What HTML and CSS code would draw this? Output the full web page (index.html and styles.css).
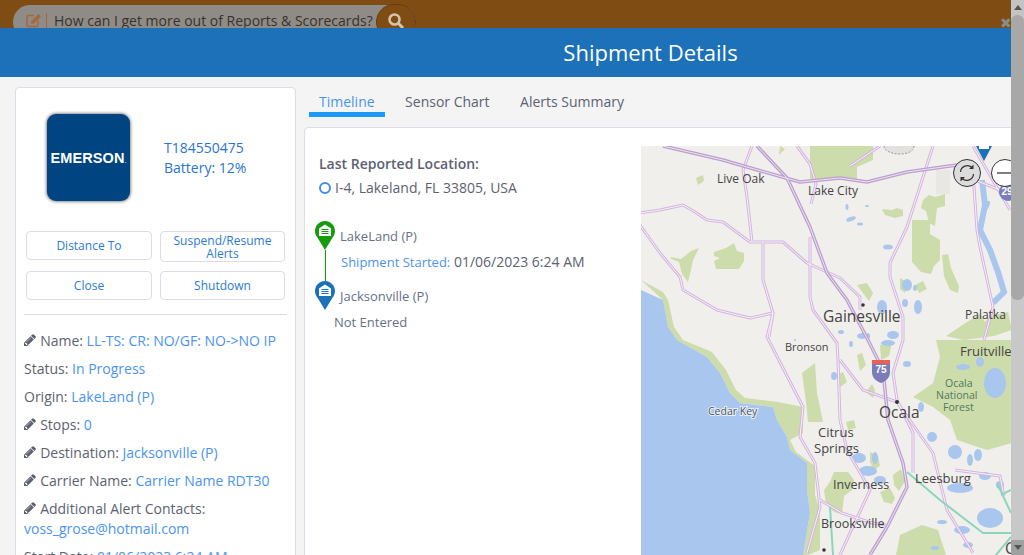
FILE: index.html
```html
<!DOCTYPE html>
<html lang="en">
<head>
<meta charset="utf-8">
<title>Shipment Details</title>
<link rel="stylesheet" href="styles.css">
</head>
<body>
<svg class="defs" aria-hidden="true">
  <symbol id="pencil" viewBox="0 0 1792 1792"><path d="M363 1408l91-91-235-235-91 91v107h128v128h107zm523-928q0-22-22-22-10 0-17 7l-542 542q-7 7-7 17 0 22 22 22 10 0 17-7l542-542q7-7 7-17zm-54-192l416 416-832 832h-416v-416zm683 96q0 53-37 90l-166 166-416-416 166-165q36-38 90-38 53 0 91 38l235 234q37 39 37 91z"/></symbol>
  <symbol id="pin" viewBox="0 0 20 29"><path fill="currentColor" d="M10 0C4.500 0 0 4.400 0 10c0 3 1.200 5.200 3 7.500L10 29l7-11.500c1.800-2.300 3-4.500 3-7.500C20 4.400 15.500 0 10 0z"/><path fill="#fff" d="M10 3.500 16 7.500V15H4V7.500z"/><path fill="currentColor" d="M6.500 8h7v1h-7zM6.500 10h7v1h-7zM6.500 12h7v1h-7z"/></symbol>
</svg>
<div class="app">
  <div class="window">
    <div class="backdrop">
      <div class="search-pill">
        <svg class="pill-icon" viewBox="0 0 18 16"><path fill="none" stroke="#a5683a" stroke-width="1.500" d="M13 8.500V13a1.500 1.500 0 0 1-1.500 1.500h-8A1.500 1.500 0 0 1 2 13V5a1.500 1.500 0 0 1 1.500-1.500H9"/><path fill="#a5683a" d="M6.500 9 13.500 2l2.500 2.500L9 11.500 6 12z"/></svg>
        <span class="pill-sep"></span>
        <span class="pill-text">How can I get more out of Reports &amp; Scorecards?</span>
        <span class="pill-btn"><svg viewBox="0 0 18 18" class="pill-search"><circle cx="7.500" cy="7.500" r="5" fill="none" stroke="#d8c3ab" stroke-width="2.600"/><path d="M11 11l5 5" stroke="#d8c3ab" stroke-width="3"/></svg></span>
      </div>
      <span class="backdrop-close">✖</span>
    </div>
    <header class="modal-header"><h1>Shipment Details</h1></header>
    <main class="modal-body">
      <aside class="card">
        <div class="device">
          <div class="logo"><span>EMERSON<small>.</small></span></div>
          <div class="device-info"><div>T184550475</div><div>Battery: 12%</div></div>
        </div>
        <div class="actions">
          <button class="btn">Distance To</button>
          <button class="btn btn-tall">Suspend/Resume Alerts</button>
          <button class="btn">Close</button>
          <button class="btn">Shutdown</button>
        </div>
        <hr class="divider">
        <div class="field"><svg class="pencil"><use href="#pencil"/></svg> Name: <a>LL-TS: CR: NO/GF: NO-&gt;NO IP</a></div>
        <div class="field">Status: <a>In Progress</a></div>
        <div class="field">Origin: <a>LakeLand (P)</a></div>
        <div class="field"><svg class="pencil"><use href="#pencil"/></svg> Stops: <a>0</a></div>
        <div class="field"><svg class="pencil"><use href="#pencil"/></svg> Destination: <a>Jacksonville (P)</a></div>
        <div class="field"><svg class="pencil"><use href="#pencil"/></svg> Carrier Name: <a>Carrier Name RDT30</a></div>
        <div class="field"><svg class="pencil"><use href="#pencil"/></svg> Additional Alert Contacts:<br><a>voss_grose@hotmail.com</a></div>
        <div class="field">Start Date: <a>01/06/2023 6:24 AM</a></div>
      </aside>
      <section class="content">
        <nav class="tabs">
          <span class="tab tab-active">Timeline</span>
          <span class="tab">Sensor Chart</span>
          <span class="tab">Alerts Summary</span>
        </nav>
        <div class="panel">
          <div class="timeline">
            <div class="last-title">Last Reported Location:</div>
            <div class="last-value"><span class="ring"></span>I-4, Lakeland, FL 33805, USA</div>
            <div class="stop stop-first"><svg class="pin pin-green"><use href="#pin"/></svg><span>LakeLand (P)</span></div>
            <div class="stop-detail stop-rail"><a>Shipment Started:</a> 01/06/2023 6:24 AM</div>
            <div class="stop"><svg class="pin pin-blue"><use href="#pin"/></svg><span>Jacksonville (P)</span></div>
            <div class="stop-detail stop-last">Not Entered</div>
          </div>
          <svg class="map" viewBox="641 146 375 409" width="375" height="409">
            <rect x="641" y="146" width="375" height="409" fill="#f1efec"/>
            <g fill="#cddcab">
              <path d="M810 146h63v14l-16 7v13h-47z"/>
              <path d="M671 257l10 2 10-8 8-3-6 12-3 14-2 8-6-8-3-12-8-3z"/>
              <path d="M714 252l12-4 8-5 3 8 7 2v8l-5 8h-23l-2-8 6-3-6-2z"/>
              <path d="M923 200l6-5 6 2 10-3v12l-8 2-2 18-6-3-3-12-5-3z"/>
              <path d="M912 220h18v14l10 6v20l-6 6-3 8-10-2-9-10z"/>
              <path d="M882 209l10 1 5-2 6 2v6l-8 2-10-3z"/>
              <path d="M942 255l6-1 3 14 8 18-1 7-8-3-6-14z"/>
              <path d="M915 285l8-4 4 8-8 4zM900 278l8 5-3 10-5-4z"/>
              <path d="M1012 340H936l4 17-7 26-20 14 20 10 17 13 7 20 30 10 25-7z"/>
              <path d="M946 336l18-12 16-10 5 8 5-6 18-4 4 18-18 6-30 4z"/>
              <path d="M880 345l12-3-3 14-8 4z"/>
              <path d="M641 280L663 292 668 300 674 327 683 340 712 352 726 370 736 390 745 398 778 402 803 407 803 433 790 440 796 452 815 466 815 495 820 510 820 550 808 555 803 555 810 513 807 490 807 463 790 450 787 437 777 420 773 407 740 403 730 393 720 373 707 357 677 340 668 327 663 300Z"/>
              <path d="M802 373l13-10 2 30 6 29h-15l-2-20z"/>
              <path d="M834 472h14l6 8-2 10-8 6-2 18-8-2-8-8-2-14 6-8z"/>
              <path d="M893 475l8-6 4 12-6 10-5-6z"/>
              <path d="M857 355l5-2 4 12-6 6z"/>
              <path d="M866 392l6-8 3 6-2 8zM870 452l8 4 2 10-6 4-4-8z"/>
              <path d="M900 535l22-10 16 5 8 25h-50z"/>
              <path d="M857 285l10-2 6 10-4 8zM696 178l7-3 1 6-6 4zM780 146l5 3-6 6z"/>
              <path d="M836 375l7-3 4 10-7 5zM846 422l8-2 2 8-8 2z"/>
              <path d="M880 492l10-4 5 10-3 6-8-2z"/>
            </g>
            <path d="M884 146c0 5 8 8 16 8s14-3 14-8" fill="#e3e1dd" stroke="#9a9a94" stroke-dasharray="2 1.500"/>
            <rect x="936" y="170" width="14" height="24" fill="#e9e7e3"/>
            <path fill="#a9c6ee" d="M641 290l22 10 5 27 9 13 30 17 13 16 10 20 10 10 33 4 4 13 10 17 3 13 17 13 0 27 3 23-7 42H641z"/>
            <path d="M982 180l3 25-5 25 10 20 8 22 6 20-11 11" fill="none" stroke="#a9c6ee" stroke-width="6"/>
            <g fill="#a9c6ee">
              <ellipse cx="847" cy="207" rx="1.500" ry="3"/><ellipse cx="851" cy="219" rx="5" ry="2" transform="rotate(-20 851 219)"/><ellipse cx="860" cy="224" rx="3" ry="1.500"/><ellipse cx="867" cy="206" rx="2" ry="1"/>
              <ellipse cx="888" cy="247" rx="5" ry="2.500"/><ellipse cx="907" cy="285" rx="5" ry="6"/><ellipse cx="915" cy="288" rx="2" ry="3"/><ellipse cx="918" cy="307" rx="4" ry="7"/>
              <ellipse cx="882" cy="307" rx="5" ry="7"/><ellipse cx="905" cy="303" rx="3" ry="4"/><ellipse cx="862" cy="336" rx="5" ry="3"/><ellipse cx="893" cy="335" rx="6" ry="4"/>
              <ellipse cx="986" cy="207" rx="2.500" ry="7" transform="rotate(30 986 207)"/><ellipse cx="868" cy="336" rx="2" ry="3"/><ellipse cx="841" cy="332" rx="3" ry="2"/>
              <ellipse cx="995" cy="383" rx="11" ry="15"/><ellipse cx="963" cy="367" rx="7" ry="3"/><ellipse cx="980" cy="362" rx="4" ry="5"/>
              <ellipse cx="834" cy="376" rx="3" ry="4"/><ellipse cx="907" cy="364" rx="4" ry="3"/><ellipse cx="888" cy="343" rx="7" ry="3"/>
              <ellipse cx="932" cy="437" rx="5" ry="5"/><ellipse cx="885" cy="393" rx="1" ry="2"/><ellipse cx="921" cy="407" rx="3" ry="5"/>
              <ellipse cx="859" cy="458" rx="7" ry="5"/><ellipse cx="868" cy="471" rx="9" ry="5"/><ellipse cx="880" cy="480" rx="6" ry="4"/><ellipse cx="875" cy="458" rx="3" ry="6"/>
              <ellipse cx="955" cy="452" rx="7" ry="7"/><ellipse cx="960" cy="488" rx="13" ry="5"/><ellipse cx="985" cy="476" rx="6" ry="4"/>
              <ellipse cx="970" cy="460" rx="3" ry="6"/><ellipse cx="978" cy="455" rx="4" ry="6"/><ellipse cx="1000" cy="485" rx="4" ry="4"/><ellipse cx="990" cy="518" rx="13" ry="10"/>
              <ellipse cx="962" cy="530" rx="8" ry="4"/><ellipse cx="942" cy="522" rx="5" ry="2"/><ellipse cx="935" cy="548" rx="4" ry="2"/><ellipse cx="968" cy="545" rx="5" ry="3"/>
              <ellipse cx="851" cy="344" rx="2" ry="3"/><ellipse cx="795" cy="340" rx="1" ry="1"/>
            </g>
            <g fill="none" stroke-linejoin="round">
              <g stroke="#d3b6df" stroke-width="3">
                <path d="M640 213l20-3 23-5 12 7 12 8 16 2 27 20h33l24 21 33 15 20 19v13"/>
                <path d="M640 225l20 28 20 24 3 13 34 20 33 8 23-5-6 24 36 70-3 30 15 26 5 44-13 46"/>
                <path d="M752 146l-9 24 4 27 5 45"/>
                <path d="M763 242v38l10 33-4 24"/>
                <path d="M810 237v60l3 13 24 33 1 17 2 60 7 30 23 40-20 43-10 22"/>
                <path d="M933 146l-26 81-17 36v14l13 40v23l-10 33 4 27 16 33v40"/>
                <path d="M840 360l23 30 34 12 36 51 14 57 26 43"/>
                <path d="M973 173l4 57 3 17 13 60-9 33"/>
                <path d="M973 146l37 64"/>
                <path d="M955 470l45 6 4 20M880 146l-30 20"/>
                <path d="M820 500l22 13 30 10 14 2"/>
                <path d="M975 180l25 10h11"/>
                <path d="M797 146l13 18 6 20-5 20"/>
              </g>
              <g stroke="#f7f2f7" stroke-width="1">
                <path d="M640 213l20-3 23-5 12 7 12 8 16 2 27 20h33l24 21 33 15 20 19v13"/>
                <path d="M640 225l20 28 20 24 3 13 34 20 33 8 23-5-6 24 36 70-3 30 15 26 5 44-13 46"/>
                <path d="M752 146l-9 24 4 27 5 45"/>
                <path d="M763 242v38l10 33-4 24"/>
                <path d="M810 237v60l3 13 24 33 1 17 2 60 7 30 23 40-20 43-10 22"/>
                <path d="M933 146l-26 81-17 36v14l13 40v23l-10 33 4 27 16 33v40"/>
                <path d="M840 360l23 30 34 12 36 51 14 57 26 43"/>
                <path d="M973 173l4 57 3 17 13 60-9 33"/>
                <path d="M973 146l37 64"/>
                <path d="M955 470l45 6 4 20M880 146l-30 20"/>
                <path d="M820 500l22 13 30 10 14 2"/>
                <path d="M975 180l25 10h11"/>
                <path d="M797 146l13 18 6 20-5 20"/>
              </g>
              <g stroke="#bba0d0" stroke-width="3.500">
                <path d="M663 146l60 14 24 7 53 15 40-4 27 4 40-10 50-7 16-3"/>
                <path d="M757 146l30 32 23 49 17 46 20 27 20 38 16 32 5 50 15 43 4 24-20 40-17 28"/>
              </g>
              <g stroke="#eee4f0" stroke-width="1">
                <path d="M663 146l60 14 24 7 53 15 40-4 27 4 40-10 50-7 16-3"/>
                <path d="M757 146l30 32 23 49 17 46 20 27 20 38 16 32 5 50 15 43 4 24-20 40-17 28"/>
              </g>
              <g stroke="#8ad6bd" stroke-width="2">
                <path d="M907 472l33 28 43 33h28M830 507l3 48M997 483l14 30M1011 490l-10 5M1011 537l-15 18"/>
              </g>
            </g>
            <circle cx="863" cy="305" r="1.800" fill="#333"/><circle cx="897" cy="402" r="2" fill="#333"/><circle cx="824" cy="550" r="1.800" fill="#333"/>
            <g>
              <path d="M872 360h18v12c0 6-4 9-9 11-5-2-9-5-9-11z" fill="#7a7db8"/>
              <path d="M872 360h18v4h-18z" fill="#e8605c"/>
              <text x="881" y="372.500" class="shield">75</text>
              <circle cx="1008" cy="192" r="9" fill="#7a7db8"/>
              <text x="1007" y="195" class="shield">29</text>
            </g>
            <g class="map-labels">
              <text x="717" y="183">Live Oak</text>
              <text x="808" y="195">Lake City</text>
              <text x="823" y="322" class="lg">Gainesville</text>
              <text x="965" y="319">Palatka</text>
              <text x="785" y="351" class="sm">Bronson</text>
              <text x="960" y="356" class="md">Fruitville</text>
              <text x="708" y="415" class="coast">Cedar Key</text>
              <text x="879" y="418" class="lg">Ocala</text>
              <text x="818" y="437" class="md">Citrus</text>
              <text x="814" y="453" class="md">Springs</text>
              <text x="915" y="483" class="md">Leesburg</text>
              <text x="833" y="489" class="md2">Inverness</text>
              <text x="821" y="528" class="md2">Brooksville</text>
              <text x="945" y="387" class="park">Ocala</text>
              <text x="936" y="399" class="park">National</text>
              <text x="943" y="411" class="park">Forest</text>
              <text x="1005" y="554" class="lg">C</text>
            </g>
            <path d="M976 146h16l-8 15z" fill="#1c71b8"/><path d="M979 146h10v3h-10z" fill="#fff"/>
            <circle cx="967" cy="173" r="13.500" fill="#dcdcdc" stroke="#333" stroke-width="1"/>
            <path d="M960.500 172a6.800 6.800 0 0 1 11.500-4.500M973.500 174a6.800 6.800 0 0 1-11.500 4.500" fill="none" stroke="#333" stroke-width="1.200"/>
            <path d="M973.500 164.500v4.500h-4.500zM960.500 181.500V177h4.500z" fill="#333"/>
            <circle cx="1005" cy="173" r="13.500" fill="#fff" stroke="#333" stroke-width="1"/>
            <path d="M997 173h20" stroke="#555" stroke-width="1.500"/>
          </svg>
        </div>
      </section>
    </main>
  </div>
  <div class="scrollbar">
    <div class="scroll-btn"><span class="arrow-up"></span></div>
    <div class="scroll-thumb"></div>
    <div class="scroll-track"></div>
    <div class="scroll-btn scroll-btn-end"><span class="arrow-down"></span></div>
  </div>
</div>
</body>
</html>
```
FILE: styles.css
```css
* { box-sizing: border-box; }
html, body { margin: 0; height: 100%; overflow: hidden; }
body { font-family: "Open Sans", "Noto Sans", sans-serif; font-size: 14px; color: #5c6272; background: #f4f4f4; }
.defs { width: 0; height: 0; display: block; }
.app { display: flex; height: 555px; }
.window { flex: 1; min-width: 0; height: 555px; overflow: hidden; display: flex; flex-direction: column; }

.backdrop { flex: none; height: 28px; background: #7f4c14; padding: 5px 5px 0 13px; display: flex; justify-content: space-between; overflow: hidden; }
.search-pill { width: 403px; height: 34px; border-radius: 17px; background: #8f8b87; display: flex; align-items: flex-start; padding: 7px 0 0 12px; position: relative; }
.pill-icon { width: 18px; height: 16px; flex: none; }
.pill-sep { width: 1px; height: 15px; background: #a5683a; margin: 1px 7px 0 3px; flex: none; }
.pill-text { font-size: 14px; line-height: 17px; color: #38322d; white-space: nowrap; }
.pill-btn { position: absolute; left: 363px; top: -1px; width: 40px; height: 36px; border-radius: 20px; background: #7f4c14; border: 1px solid #6a3d0e; }
.pill-search { position: absolute; left: 10px; top: 7px; width: 18px; height: 18px; }
.backdrop-close { color: #8b8b88; font-size: 14px; line-height: 1; margin-top: 11px; margin-right: -6px; }

.modal-header { flex: none; height: 49px; background: #1c71b8; display: flex; align-items: center; justify-content: center; padding: 0 0 2px 277px; margin-right: -13px; }
.modal-header h1 { margin: 0; font-size: 22px; font-weight: 400; color: #fff; }

.modal-body { flex: 1; min-height: 0; display: flex; gap: 8px; padding: 10px 0 0 15px; overflow: hidden; }
.card { flex: none; width: 281px; height: 600px; background: #fff; border: 1px solid #dddce8; border-radius: 4px; padding: 25px 8px 0; }
.device { display: flex; align-items: center; gap: 34px; padding: 1px 0 0 23px; }
.logo { width: 83px; height: 87px; flex: none; border-radius: 9px; background: #004481; box-shadow: 0 0 3px 1px rgba(0, 0, 0, .45); display: flex; align-items: center; justify-content: center; color: #fff; font-family: "Liberation Sans", sans-serif; font-weight: 700; font-size: 14.500px; letter-spacing: .1px; }
.logo small { font-size: 7px; font-weight: 400; }
.device-info { color: #2a75cf; line-height: 20px; }

.actions { display: grid; grid-template-columns: 126px 125px; column-gap: 8px; row-gap: 9px; margin: 30px 0 0 2px; align-items: start; }
.btn { height: 29px; background: #fff; border: 1px solid #dddce8; border-radius: 4px; padding: 0 0 1px; color: #2a7bd5; font-family: inherit; font-size: 12px; line-height: 13px; }
.btn-tall { height: 31px; padding: 0 10px; }
.divider { border: 0; border-top: 1px solid #dedede; margin: 14px 0 16px; height: 0; }
.field { line-height: 20px; margin-bottom: 8px; white-space: nowrap; }
.field a { color: #4a94f0; }
.pencil { width: 14px; height: 14px; fill: #5c6272; vertical-align: -2px; margin-right: -1.500px; }

.content { flex: 1; min-width: 0; display: flex; flex-direction: column; }
.tabs { flex: none; height: 30px; margin-bottom: 10px; display: flex; padding-left: 5px; }
.tab { padding: 5px 10px 0; height: 30px; margin-right: 10.500px; color: #5c6272; line-height: 20px; }
.tab-active { color: #4a94f0; border-bottom: 5px solid #1a9bfc; }
.panel { flex: none; height: 480px; margin-right: -30px; background: #fff; border: 1px solid #dddce8; border-radius: 4px 0 0 0; padding-top: 18px; display: flex; }
.timeline { flex: none; width: 336px; padding: 8px 0 0 10px; }
.last-title { font-weight: 600; line-height: 20px; padding-left: 4px; }
.last-value { display: flex; align-items: center; line-height: 20px; margin-top: 4px; padding-left: 4px; }
.ring { width: 12px; height: 12px; border: 2px solid #3f8ff0; border-radius: 50%; margin-right: 4px; }
.stop { display: flex; align-items: center; gap: 5px; height: 29px; font-size: 13px; color: #667089; }
.stop-first { margin-top: 23px; }
.pin { width: 20px; height: 29px; flex: none; }
.pin-green { color: #169b0c; }
.pin-blue { color: #1c71b8; }
.stop-detail { line-height: 20px; }
.stop-rail { margin-left: 10px; border-left: 1px solid #169b0c; height: 31px; padding: 2px 0 0 15px; }
.stop-rail a { color: #4a94f0; font-size: 13px; }
.stop-last { margin-left: 19px; font-size: 13px; margin-top: 2px; color: #667089; }
.map { display: block; flex: none; }
.map-labels text { font-family: "Open Sans", sans-serif; font-size: 12px; fill: #444; }
.map-labels .lg { font-size: 15.500px; }
.map-labels .md { font-size: 13px; }
.map-labels .md2 { font-size: 12.500px; }
.map-labels .sm { font-size: 11px; }
.map-labels .coast { font-size: 10.500px; fill: #4c5560; stroke: #e8eef8; stroke-width: 2px; paint-order: stroke; }
.map-labels .park { font-size: 10.500px; fill: #4f7a5b; }
.shield { font-family: "Liberation Sans", sans-serif; font-size: 10px; font-weight: 700; fill: #fff; text-anchor: middle; }

.scrollbar { flex: none; width: 13px; height: 555px; background: #c8c8c8; display: flex; flex-direction: column; position: relative; z-index: 2; }
.scroll-btn { flex: none; height: 15px; background: #c4c4c4; display: flex; align-items: center; justify-content: center; }
.scroll-btn-end { background: #a0a0a0; }
.scroll-thumb { flex: none; height: 285px; background: #a8a8a8; border-radius: 6px; }
.scroll-track { flex: 1; }
.arrow-up, .arrow-down { width: 0; height: 0; border-left: 4px solid transparent; border-right: 4px solid transparent; }
.arrow-up { border-bottom: 5px solid #555; }
.arrow-down { border-top: 5px solid #555; }
```
